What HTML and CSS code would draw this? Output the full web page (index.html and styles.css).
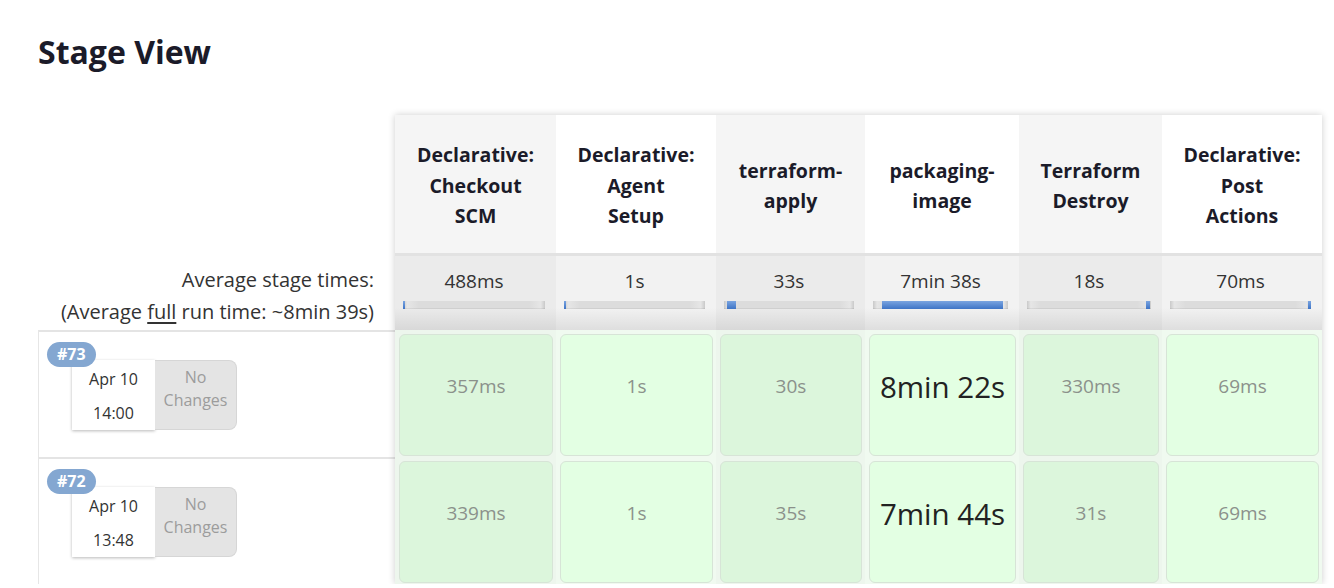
FILE: index.html
```html
<!DOCTYPE html>
<html lang="en">
<head>
<meta charset="utf-8">
<title>Stage View</title>
<link rel="stylesheet" href="styles.css">
</head>
<body>
<div class="page">
  <h1 class="title">Stage View</h1>
  <div class="view">
    <div class="runs">
      <div class="runs-head"></div>
      <div class="avg-label">
        <div>Average stage times:</div>
        <div>(Average <u>full</u> run time: ~8min 39s)</div>
      </div>
      <div class="run">
        <span class="badge">#73</span>
        <div class="run-info">
          <div class="date"><div>Apr 10</div><div>14:00</div></div>
          <div class="changes">No<br>Changes</div>
        </div>
      </div>
      <div class="run">
        <span class="badge">#72</span>
        <div class="run-info">
          <div class="date"><div>Apr 10</div><div>13:48</div></div>
          <div class="changes">No<br>Changes</div>
        </div>
      </div>
    </div>

    <div class="stages">
      <div class="head odd">Declarative:<br>Checkout<br>SCM</div>
      <div class="head even">Declarative:<br>Agent<br>Setup</div>
      <div class="head odd">terraform-<br>apply</div>
      <div class="head even">packaging-<br>image</div>
      <div class="head odd">Terraform<br>Destroy</div>
      <div class="head even">Declarative:<br>Post<br>Actions</div>

      <div class="avg odd"><div class="avg-time">488ms</div><div class="bar"><span class="fill" style="left:0%;width:1.5%"></span></div></div>
      <div class="avg even"><div class="avg-time">1s</div><div class="bar"><span class="fill" style="left:0%;width:1.5%"></span></div></div>
      <div class="avg odd"><div class="avg-time">33s</div><div class="bar"><span class="fill" style="left:2%;width:7%"></span></div></div>
      <div class="avg even"><div class="avg-time">7min 38s</div><div class="bar"><span class="fill" style="left:7%;width:89%"></span></div></div>
      <div class="avg odd"><div class="avg-time">18s</div><div class="bar"><span class="fill" style="left:96%;width:3.5%"></span></div></div>
      <div class="avg even"><div class="avg-time">70ms</div><div class="bar"><span class="fill" style="left:98%;width:2%"></span></div></div>

      <div class="cell odd"><div class="box"><div class="dur">357ms</div></div></div>
      <div class="cell even"><div class="box"><div class="dur">1s</div></div></div>
      <div class="cell odd"><div class="box"><div class="dur">30s</div></div></div>
      <div class="cell even"><div class="box"><div class="dur big">8min 22s</div></div></div>
      <div class="cell odd"><div class="box"><div class="dur">330ms</div></div></div>
      <div class="cell even"><div class="box"><div class="dur">69ms</div></div></div>

      <div class="cell odd"><div class="box"><div class="dur">339ms</div></div></div>
      <div class="cell even"><div class="box"><div class="dur">1s</div></div></div>
      <div class="cell odd"><div class="box"><div class="dur">35s</div></div></div>
      <div class="cell even"><div class="box"><div class="dur big">7min 44s</div></div></div>
      <div class="cell odd"><div class="box"><div class="dur">31s</div></div></div>
      <div class="cell even"><div class="box"><div class="dur">69ms</div></div></div>
    </div>
  </div>
</div>
</body>
</html>
```

FILE: styles.css
```css
* { box-sizing: border-box; }

html, body {
  margin: 0;
  padding: 0;
  background: #fff;
  overflow: hidden;
}

body {
  font-family: "Open Sans", "Noto Sans", sans-serif;
  color: #333;
}

.page {
  padding: 29px 0 0 38px;
}

.title {
  margin: 0;
  font-size: 32px;
  line-height: 45px;
  font-weight: 700;
  color: #1b1b29;
}

.view {
  display: flex;
  margin-top: 41px;
  align-items: flex-start;
}

/* left column */
.runs {
  width: 357px;
  display: flex;
  flex-direction: column;
}

.runs-head {
  height: 138px;
}

.avg-label {
  height: 77px;
  padding: 11px 21px 0 0;
  text-align: right;
  font-size: 20px;
  line-height: 32px;
  color: #333;
}

.avg-label u {
  text-decoration-thickness: 2px;
  text-underline-offset: 3px;
}

.run {
  height: 127px;
  border-top: 2px solid #e4e4e4;
  border-left: 1px solid #e6e6e6;
  padding: 10px 0 0 8px;
}

.badge {
  position: relative;
  z-index: 1;
  display: inline-block;
  height: 25px;
  line-height: 25px;
  padding: 0 10px;
  border-radius: 13px;
  background: #84a7d1;
  color: #fff;
  font-weight: 700;
  font-size: 16px;
}

.run-info {
  display: flex;
  margin: -7px 0 0 25px;
}

.date {
  width: 83px;
  height: 70px;
  background: #fff;
  box-shadow: 0 1px 3px rgba(0, 0, 0, 0.28);
  text-align: center;
  font-size: 16px;
  line-height: 34px;
  padding-top: 2px;
  color: #333;
}

.changes {
  width: 82px;
  height: 70px;
  background: #e4e4e4;
  border: 1px solid #d6d6d6;
  border-left: none;
  border-radius: 0 8px 8px 0;
  text-align: center;
  font-size: 16px;
  line-height: 23px;
  padding-top: 5px;
  color: #9c9c9c;
}

/* stage table */
.stages {
  display: grid;
  grid-template-columns: 161px 160px 149px 154px 143px 160px;
  grid-template-rows: 138px 77px 127px 127px;
  box-shadow: 0 0 7px rgba(0, 0, 0, 0.2);
}

.head {
  display: flex;
  align-items: center;
  justify-content: center;
  text-align: center;
  font-weight: 700;
  font-size: 19.5px;
  line-height: 30.5px;
  color: #1b1b29;
  padding-top: 4px;
}

.head.odd { background: #f5f5f5; }
.head.even { background: #fff; }

.avg {
  padding: 13px 11px 0 8px;
  border-top: 3px solid #e2e2e2;
  text-align: center;
}

.avg.odd { background: linear-gradient(to bottom, #ebebeb 0, #ebebeb 70%, #d8d8d8 100%); }
.avg.even { background: linear-gradient(to bottom, #f2f2f2 0, #f2f2f2 70%, #dedede 100%); }

.avg-time {
  font-size: 19px;
  line-height: 24px;
  color: #333;
}

.bar {
  position: relative;
  height: 8px;
  margin-top: 8px;
  background: linear-gradient(to right, #c9c9c9 0, #e6e6e6 3%, #dcdcdc 11%, #dcdcdc 89%, #e6e6e6 97%, #c9c9c9 100%);
  box-shadow: inset 0 -1px 0 rgba(0, 0, 0, 0.06);
}

.fill {
  position: absolute;
  top: 0;
  bottom: 0;
  min-width: 2px;
  background: linear-gradient(to bottom, #7aa4e0, #3e74c6);
}

.cell {
  padding: 4px 3px 1px 4px;
}

.cell.odd { background: #edf6ed; }
.cell.even { background: #f0faf0; }

.box {
  height: 100%;
  border: 1px solid #d7e4d7;
  border-radius: 6px;
}

.cell.odd .box { background: #dcf6dc; }
.cell.even .box { background: #e3ffe3; }

.dur {
  height: 102px;
  display: flex;
  align-items: center;
  justify-content: center;
  font-size: 19px;
  color: #8b918b;
}

.dur.big {
  font-size: 29.5px;
  color: #222;
}
```
